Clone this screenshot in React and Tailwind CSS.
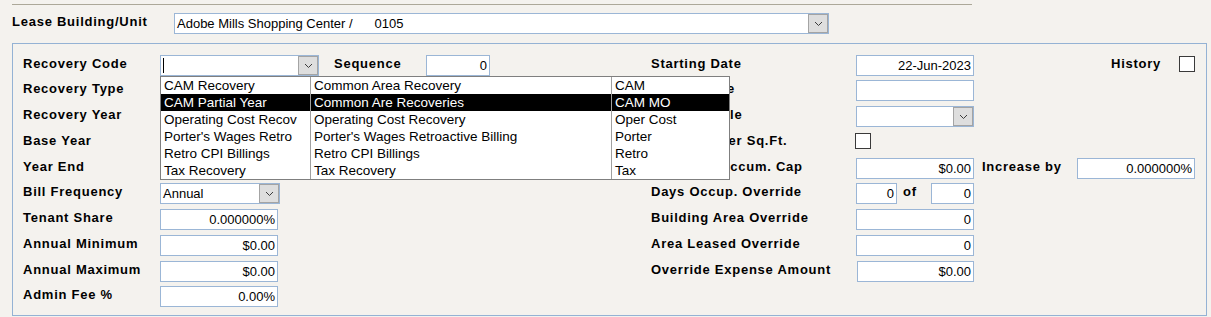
import React from 'react';

const font = "font-['Liberation_Sans',Arial,sans-serif]";

function Chevron() {
    return (
        <svg width="9" height="6" viewBox="0 0 9 6" className="block">
            <path d="M1 1 L4.5 4.5 L8 1" fill="none" stroke="#3c3c3c" strokeWidth="1" />
        </svg>
    );
}

function Combo({ width, value, cursor, children }) {
    return (
        <div className={`relative flex h-[21px] shrink-0 border border-[#9bb6d6] bg-white ${width}`}>
            <div className="flex flex-1 items-center overflow-hidden whitespace-pre pl-[2px] text-[13px] text-black">
                {cursor && <span className="h-[15px] w-px bg-black" />}
                {value}
            </div>
            <div className="flex w-[20px] items-center justify-center border border-[#a4a4a4] bg-[#dedede]">
                <Chevron />
            </div>
            {children}
        </div>
    );
}

function Field({ width = 'w-[118px]', value = '' }) {
    return (
        <div className={`flex h-[21px] shrink-0 items-center justify-end border border-[#9bb6d6] bg-white pr-[2px] text-[13px] text-black ${width}`}>
            {value}
        </div>
    );
}

function Check() {
    return <div className="mt-px h-[16px] w-[16px] shrink-0 border border-[#3a3a3a] bg-white" />;
}

function Label({ children, width }) {
    return (
        <div className={`shrink-0 whitespace-nowrap text-[13px] font-bold leading-[17px] tracking-[0.75px] text-black ${width}`}>
            {children}
        </div>
    );
}

const options = [
    ['CAM Recovery', 'Common Area Recovery', 'CAM'],
    ['CAM Partial Year', 'Common Are Recoveries', 'CAM MO'],
    ['Operating Cost Recov', 'Operating Cost Recovery', 'Oper Cost'],
    ["Porter's Wages Retro", "Porter's Wages Retroactive Billing", 'Porter'],
    ['Retro CPI Billings', 'Retro CPI Billings', 'Retro'],
    ['Tax Recovery', 'Tax Recovery', 'Tax'],
];

function DropList() {
    return (
        <div className="absolute left-[-1px] top-[20px] z-10 w-[570px] border border-[#7f7f7f] bg-white">
            {options.map((row, i) => {
                const sel = i === 1;
                return (
                    <div
                        key={row[0]}
                        className={`flex h-[17px] items-center text-[13.5px] leading-[17px] ${sel ? 'bg-black text-white' : 'text-black'}`}
                    >
                        <div className="w-[150px] shrink-0 overflow-hidden whitespace-nowrap border-r border-[#a0a0a0] pl-[3px]">{row[0]}</div>
                        <div className="w-[301px] shrink-0 overflow-hidden whitespace-nowrap border-r border-[#a0a0a0] pl-[3px]">{row[1]}</div>
                        <div className="flex-1 whitespace-nowrap pl-[3px]">{row[2]}</div>
                    </div>
                );
            })}
        </div>
    );
}

function Row({ h, left, right }) {
    return (
        <div className={`flex shrink-0 ${h}`}>
            <div className="flex w-[628px] shrink-0 items-start">{left}</div>
            <div className="flex items-start">{right}</div>
        </div>
    );
}

export default function App() {
    const L = 'w-[137px]';
    const R = 'w-[205px]';
    return (
        <div className={`h-[317px] w-[1211px] overflow-hidden bg-[#f4f2ee] ${font}`}>
            <div className="ml-[12px] mt-[4px] h-px w-[960px] bg-[#aca899]" />

            <div className="ml-[12px] mt-[8px] flex h-[21px] items-start">
                <Label width="w-[162px]">Lease Building/Unit</Label>
                <Combo width="w-[655px]" value={
                    <>
                        <span>Adobe Mills Shopping Center /</span>
                        <span className="ml-[22px]">0105</span>
                    </>
                } />
            </div>

            <div className="ml-[12px] mt-[9px] flex h-[273px] w-[1195px] flex-col border border-[#94b2d4] pl-[10px] pt-[11px]">
                <Row
                    h="h-[25px]"
                    left={
                        <>
                            <Label width={L}>Recovery Code</Label>
                            <Combo width="w-[159px]" cursor>
                                <DropList />
                            </Combo>
                            <div className="ml-[15px]">
                                <Label width="w-[92px]">Sequence</Label>
                            </div>
                            <Field width="w-[64px]" value="0" />
                        </>
                    }
                    right={
                        <>
                            <Label width={R}>Starting Date</Label>
                            <Field value="22-Jun-2023" />
                            <div className="ml-[137px]">
                                <Label width="w-[68px]">History</Label>
                            </div>
                            <Check />
                        </>
                    }
                />
                <Row
                    h="h-[26px]"
                    left={<Label width={L}>Recovery Type</Label>}
                    right={
                        <>
                            <Label width={R}>Ending Date</Label>
                            <Field />
                        </>
                    }
                />
                <Row
                    h="h-[26px]"
                    left={<Label width={L}>Recovery Year</Label>}
                    right={
                        <>
                            <Label width={R}>Bill Schedule</Label>
                            <Combo width="w-[118px]" />
                        </>
                    }
                />
                <Row
                    h="h-[26px]"
                    left={<Label width={L}>Base Year</Label>}
                    right={
                        <>
                            <Label width="w-[204px]">Calculate per Sq.Ft.</Label>
                            <Check />
                        </>
                    }
                />
                <Row
                    h="h-[25px]"
                    left={<Label width={L}>Year End</Label>}
                    right={
                        <>
                            <Label width={R}>Maximum Accum. Cap</Label>
                            <Field value="$0.00" />
                            <div className="ml-[8px]">
                                <Label width="w-[95px]">Increase by</Label>
                            </div>
                            <Field value="0.000000%" />
                        </>
                    }
                />
                <Row
                    h="h-[26px]"
                    left={
                        <>
                            <Label width={L}>Bill Frequency</Label>
                            <Combo width="w-[120px]" value="Annual" />
                        </>
                    }
                    right={
                        <>
                            <Label width={R}>Days Occup. Override</Label>
                            <Field width="w-[41px]" value="0" />
                            <div className="ml-[6px]">
                                <Label width="w-[28px]">of</Label>
                            </div>
                            <Field width="w-[43px]" value="0" />
                        </>
                    }
                />
                <Row
                    h="h-[26px]"
                    left={
                        <>
                            <Label width={L}>Tenant Share</Label>
                            <Field value="0.000000%" />
                        </>
                    }
                    right={
                        <>
                            <Label width={R}>Building Area Override</Label>
                            <Field value="0" />
                        </>
                    }
                />
                <Row
                    h="h-[26px]"
                    left={
                        <>
                            <Label width={L}>Annual Minimum</Label>
                            <Field value="$0.00" />
                        </>
                    }
                    right={
                        <>
                            <Label width={R}>Area Leased Override</Label>
                            <Field value="0" />
                        </>
                    }
                />
                <Row
                    h="h-[25px]"
                    left={
                        <>
                            <Label width={L}>Annual Maximum</Label>
                            <Field value="$0.00" />
                        </>
                    }
                    right={
                        <>
                            <Label width="w-[206px]">Override Expense Amount</Label>
                            <Field width="w-[117px]" value="$0.00" />
                        </>
                    }
                />
                <Row
                    h="h-[21px]"
                    left={
                        <>
                            <Label width={L}>Admin Fee %</Label>
                            <Field value="0.00%" />
                        </>
                    }
                />
            </div>
        </div>
    );
}
